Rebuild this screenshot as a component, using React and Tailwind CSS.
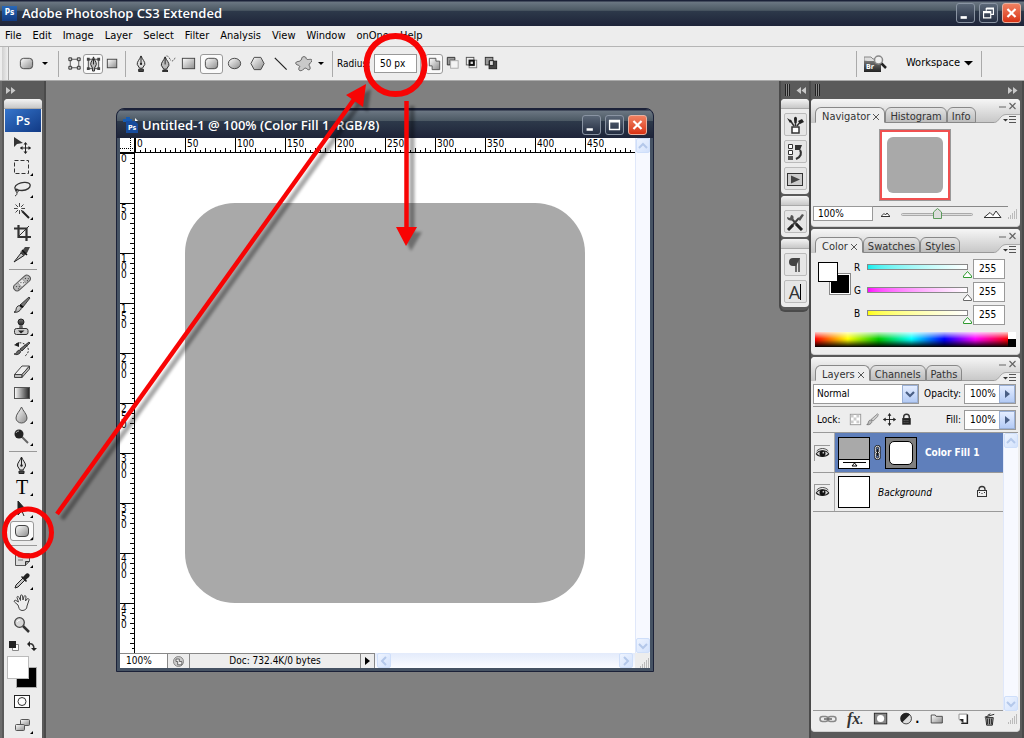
import { useState } from 'react';

const outlined = { fill: 'none', stroke: '#333', strokeWidth: 1 };

const Gradients = () => (
  <svg className="absolute h-0 w-0" aria-hidden="true">
    <defs>
      <linearGradient id="metal" x1="0" y1="0" x2="1" y2="1">
        <stop offset="0" stopColor="#fff" />
        <stop offset="1" stopColor="#8c8c8c" />
      </linearGradient>
      <linearGradient id="fade" x1="0" x2="1">
        <stop offset="0" stopColor="#fff" />
        <stop offset="1" stopColor="#222" />
      </linearGradient>
      <linearGradient id="coal" x1="0" y1="0" x2="0" y2="1">
        <stop offset="0" stopColor="#777" />
        <stop offset="1" stopColor="#222" />
      </linearGradient>
    </defs>
  </svg>
);

// every glyph is drawn on an 18 x 18 grid
const glyphs = {
  move: (
    <>
      <path d="M1 1v10l3-3 6-1z" fill="#333" />
      <path d="M12.5 7v10M7.5 12h10" stroke="#222" strokeWidth="1" />
      <path d="M12.5 6l-2 2.5h4zM12.5 18l-2-2.5h4zM7 12l2.5-2v4zM18 12l-2.5-2v4z" fill="#222" />
    </>
  ),
  marquee: <rect x="1.5" y="2.5" width="14" height="13" {...outlined} strokeDasharray="4 2" />,
  lasso: (
    <>
      <path d="M4 11C1 9 1 6 5 4c4-2.500 11-2 12 .5 1 3-3 6-8 6-3 0-5-.5-5.500-1.500" {...outlined} strokeWidth="1.300" />
      <path d="M4 9c2 1 2 3 0 3s-2-3 0-3M4 12c0 2 0 3-2 4" {...outlined} />
    </>
  ),
  wand: (
    <>
      <path d="M9 9l7 7" stroke="#222" strokeWidth="2" />
      <path d="M6.500 1v11M1 6.500h11M2.500 2.500l8 8M10.500 2.500l-8 8" {...outlined} strokeWidth=".9" />
      <circle cx="6.500" cy="6.500" r="1.800" fill="#fff" />
    </>
  ),
  crop: (
    <>
      <path d="M5.500 1v12H18M1 4.500h12.500V17" stroke="#333" strokeWidth="2.200" fill="none" />
      <path d="M6 12L16 2" stroke="#333" />
    </>
  ),
  slice: (
    <>
      <path d="M1 16L8 7l3 2.500z" fill="url(#metal)" stroke="#222" />
      <path d="M7 6l2-1 3-4h5l-3 6-3 3z" fill="#444" />
      <path d="M9 4l5 5" stroke="#111" strokeWidth="1.500" />
    </>
  ),
  heal: (
    <g transform="rotate(-42 9 9)">
      <rect x="-1" y="5.500" width="20" height="7" rx="3.500" fill="#b8b8b8" stroke="#555" />
      <rect x="6" y="6" width="6" height="6" fill="#e4e4e4" stroke="#777" strokeWidth=".6" />
      <path d="M2 8h1M4 10h1M2 11h1M14 8h1M16 10h1M14 11h1M8 8h1M10 10h1" stroke="#333" />
    </g>
  ),
  brush: (
    <>
      <path d="M7 9L16 1l1 1-7 9z" fill="#777" stroke="#222" strokeWidth=".8" />
      <path d="M1 16c3 0 1-4 4-6 2-1 4 1 3 3-1 2-4 4-7 3z" fill="url(#metal)" stroke="#222" />
      <path d="M7 9l3 2.500" stroke="#111" strokeWidth="2" />
    </>
  ),
  lockBrush: (
    <>
      <path d="M7 9L16 1l1 1-1 3-6 6z" fill="#ccc" stroke="#777" />
      <path d="M1 16c3 0 1-4 4-6 2-1 4 1 3 3-1 2-4 4-7 3z" fill="#bbb" stroke="#666" />
    </>
  ),
  stamp: (
    <>
      <circle cx="8" cy="4" r="3" fill="url(#coal)" stroke="#222" />
      <path d="M6.500 7h3l.5 4H6z" fill="#666" />
      <rect x="1.500" y="10.500" width="13.500" height="6" rx="2" fill="#ccc" stroke="#333" />
      <path d="M5 12.500h6.500L8 15.500z" fill="#222" />
    </>
  ),
  history: (
    <>
      <path d="M1 14c3 0 2-3 5-4 2 0 2 2 1 3-2 2-4 2-6 1zM7 9l9-7 1 1-8 8z" fill="#666" stroke="#222" strokeWidth=".8" />
      <path d="M3 4c5-3 10 0 12 4 1 3 0 6-3 8" {...outlined} strokeDasharray="2 1.500" />
      <path d="M1 5l5-3v5z" fill="#222" />
    </>
  ),
  eraser: (
    <>
      <path d="M1.500 12.500L9 4h7.500L9 12.500z" fill="#eee" stroke="#444" />
      <path d="M1.500 12.500H9v3H1.500zM9 15.500V12.500L16.500 4v3z" fill="#bdbdbd" stroke="#444" />
    </>
  ),
  gradient: <rect x="1.500" y="3.500" width="15" height="11" fill="url(#fade)" stroke="#555" />,
  blur: <path d="M8.500 1C7 5 3 8 3 12a5.500 5 0 0 0 11 0C14 8 10 5 8.500 1z" fill="url(#metal)" stroke="#555" />,
  dodge: (
    <>
      <path d="M8 8l7 7" stroke="#666" strokeWidth="2" />
      <circle cx="6" cy="6" r="4.500" fill="#222" />
      <path d="M3 5a3 3 0 0 1 3-2" stroke="#aaa" fill="none" />
    </>
  ),
  pen: (
    <>
      <path d="M8.500 1C7 5 4 7 4.500 10L7 14h3l2.500-4C13 7 10 5 8.500 1z" fill="#ddd" stroke="#222" />
      <path d="M8.500 1v8M6 15h5v2.500H6z" stroke="#222" fill="#444" />
      <circle cx="8.500" cy="9.500" r="1.200" fill="#222" />
    </>
  ),
  freePen: (
    <>
      <path d="M6.500 2C5 6 2 8 2.500 11L5 15h3l2.500-4C11 8 8 6 6.500 2z" fill="#bbb" stroke="#222" />
      <path d="M6.500 2v8M4 16h5v2H4z" stroke="#222" fill="#444" />
      <path d="M8 1c3 0 3 4 5 5s3-1 4-3" {...outlined} strokeDasharray="1 1" />
    </>
  ),
  arrow: <path d="M5 1v14l3.500-4 5-.5zM8.500 10l2.500 6" fill="#222" stroke="#222" />,
  rounded: <rect x="2.500" y="3.500" width="13" height="11" rx="3.500" fill="url(#metal)" stroke="#444" />,
  rect: <rect x="2.500" y="3.500" width="13" height="11" fill="url(#metal)" stroke="#444" />,
  ellipse: <ellipse cx="9" cy="9" rx="6.500" ry="5.500" fill="url(#metal)" stroke="#444" />,
  polygon: <path d="M5.500 2.500h7L16 9l-3.500 6.500h-7L2 9z" fill="url(#metal)" stroke="#444" />,
  line: <path d="M3 3l12.500 12.500" stroke="#222" strokeWidth="1.300" />,
  blob: (
    <path
      d="M7 4c0-3 5-3 5 0 1 2 6-1 6 2 0 2-4 3-3 5 2 3 1 6-2 4-2-2-3-1-5 1-4 2-5-1-3-4-1-2-5-1-4-4 1-2 5 0 6-4z"
      fill="#c9c9c9"
      stroke="#555"
    />
  ),
  shapeLayer: (
    <>
      <rect x="4.500" y="4.500" width="9" height="9" {...outlined} fill="#f2f2f2" stroke="#555" />
      <path d="M3 3h3v3H3zM12 3h3v3h-3zM3 12h3v3H3zM12 12h3v3h-3z" fill="#ccc" stroke="#333" />
    </>
  ),
  paths: (
    <>
      <path d="M3.500 4.500h11v10h-11z" fill="#ddd" stroke="#444" />
      <path d="M2 3h3v3H2zM13 3h3v3h-3zM2 13h3v3H2zM13 13h3v3h-3z" fill="#444" />
      <path d="M9 2c-1 4-3 5-3 8l2 4v3h2v-3l2-4c0-3-2-4-3-8z" fill="#bbb" stroke="#222" />
      <path d="M9 4v6" stroke="#222" />
    </>
  ),
  pixels: <rect x="3.500" y="4.500" width="10" height="9" fill="url(#metal)" stroke="#444" />,
  unite: <path d="M3.500 3.500h7v3h4v9h-8v-4h-3z" fill="url(#metal)" stroke="#555" />,
  subtract: (
    <>
      <path d="M3.500 10.500v-8h8v3h-5v5z" fill="#999" stroke="#333" />
      <rect x="7" y="6" width="8" height="8" fill="#f4f4f4" stroke="#aaa" />
    </>
  ),
  intersect: (
    <>
      <rect x="3.500" y="2.500" width="8" height="8" {...outlined} stroke="#555" />
      <rect x="6.500" y="5.500" width="8" height="8" {...outlined} stroke="#777" />
      <rect x="7" y="6" width="4.500" height="4.500" fill="#ddd" stroke="#111" strokeWidth="2" />
    </>
  ),
  exclude: (
    <>
      <rect x="3.500" y="2.500" width="8" height="8" fill="#999" stroke="#333" />
      <rect x="7.500" y="6.500" width="8" height="8" fill="#444" stroke="#222" />
      <rect x="8" y="6" width="4" height="5" fill="#ddd" stroke="#222" />
    </>
  ),
  notes: (
    <>
      <path d="M2.500 3.500h14v8l-4 4h-10z" fill="#ddd" stroke="#555" />
      <path d="M5 7h9M5 10h5" stroke="#777" />
      <path d="M12.500 15.500v-4h4" fill="#999" stroke="#333" />
    </>
  ),
  eyedropper: (
    <>
      <path d="M2 16l1-3 7-7 2 2-7 7z" fill="url(#metal)" stroke="#222" />
      <path d="M8 5l5 5 1-1-1-1.500C15 6 18 4 16 2s-4 1-6 3L9 4z" fill="#222" />
    </>
  ),
  hand: (
    <path
      d="M5 11L1.500 8c-1-1 .5-2.500 1.500-1.500L5.500 8 4 3.500c0-1.500 1.500-1.500 2 0l1.500 3V2c0-1.500 2-1.500 2 0l.5 4 1-3.500c.5-1.500 2-1 2 .5L12.500 7l1.500-2c1-1 2.500 0 2 1l-2 6c0 3-2 4.500-5 4.500s-3-3-4-5.500z"
      fill="#eee"
      stroke="#444"
    />
  ),
  zoom: (
    <>
      <path d="M10 10l6 6" stroke="#333" strokeWidth="2.500" />
      <circle cx="6.500" cy="6.500" r="4.800" fill="#d8d8d8" stroke="#444" strokeWidth="1.300" />
      <path d="M4 6a3 3 0 0 1 3-2" stroke="#fff" fill="none" />
    </>
  ),
  quickMask: (
    <>
      <rect x="1.500" y="3.500" width="15" height="12" fill="#fff" stroke="#222" />
      <circle cx="9" cy="9.500" r="4" {...outlined} />
    </>
  ),
  screen: (
    <>
      <rect x="7.500" y="3.500" width="9" height="6" rx="1" fill="url(#metal)" stroke="#555" />
      <rect x="2.500" y="8.500" width="9" height="6" rx="1" fill="url(#metal)" stroke="#555" />
    </>
  ),
  brushes: (
    <>
      <rect x="6" y="11" width="7" height="6" fill="#fff" stroke="#333" strokeWidth="1.500" />
      <path d="M8 10L4 4M9.500 10V3M11 10l4-5" stroke="#333" strokeWidth="1.500" />
      <path d="M1 2l3 5 2-2zM8 3c0-3 3-3 3 0l-.5 4h-2zM12 5l4-2 2 3-4 2z" fill="#222" />
    </>
  ),
  historyPanel: (
    <>
      <path d="M2.500 1.500h4v4h-4zM2.500 7.500h4v4h-4z" fill="#fff" stroke="#333" />
      <path d="M2 13h5v4H2z" fill="#555" />
      <path d="M10 16c5-2 6-6 4-9" fill="none" stroke="#333" strokeWidth="2.200" />
      <path d="M9 7V2h7l-2 5z" fill="#333" />
    </>
  ),
  actions: (
    <>
      <rect x="1.500" y="3.500" width="15" height="12" fill="#ccc" stroke="#333" />
      <path d="M5 5.500v8l9-4z" fill="#444" />
    </>
  ),
  presets: (
    <>
      <path d="M3 16L13 5M15 16L5 5" stroke="#444" strokeWidth="2" />
      <path d="M10 11l6 6M2 17l5-5" stroke="#222" strokeWidth="3" />
      <path d="M1 4l3 1 1-3c3 0 3 3 2 5-2 1-6 1-6-3zM12 6l4-5 2 1-4 6z" fill="#555" />
    </>
  ),
  paragraph: (
    <>
      <path d="M10 2v14M13 2v14" stroke="#444" strokeWidth="1.500" />
      <path d="M14 2H7a4 4 0 0 0 0 8h3z" fill="#444" />
    </>
  ),
  link: (
    <>
      <rect x="1" y="6.500" width="8" height="5" rx="2.500" {...outlined} stroke="#888" strokeWidth="1.500" />
      <rect x="9" y="6.500" width="8" height="5" rx="2.500" {...outlined} stroke="#888" strokeWidth="1.500" />
      <path d="M5 9h8" stroke="#666" strokeWidth="1.500" />
    </>
  ),
  mask: (
    <>
      <rect x="1.500" y="2.500" width="14" height="12" fill="#888" stroke="#222" />
      <circle cx="8.500" cy="8.500" r="4" fill="#fff" />
    </>
  ),
  adjust: (
    <>
      <circle cx="8" cy="8.500" r="6" fill="#ddd" stroke="#333" />
      <path d="M3.500 13A6 6 0 0 1 12.500 4z" fill="#222" />
    </>
  ),
  folder: <path d="M2.500 13.500v-9h4.500l1 1.500h7v7.500z" fill="url(#metal)" stroke="#444" />,
  newLayer: (
    <>
      <path d="M4.500 3.500h9v10H9l-4.500-4z" fill="#fff" stroke="#888" />
      <path d="M14 4v10H7" stroke="#222" strokeWidth="1.500" fill="none" />
      <path d="M5 9h4.500v4.500z" fill="#222" />
    </>
  ),
  trash: (
    <>
      <path d="M5 7h8l-1 8H6z" fill="#aaa" stroke="#222" />
      <path d="M7 8v6M9 8v6M11 8v6M4 6.500l10-3M7 4.500l3-1.500" stroke="#222" fill="none" />
    </>
  ),
  checker: (
    <>
      <rect x="3.500" y="3.500" width="11" height="11" fill="#fff" stroke="#999" />
      <path d="M4 4h3v3H4zM10 4h3v3h-3zM7 7h3v3H7zM4 10h3v3H4zM10 10h3v3h-3z" fill="#ccc" />
    </>
  ),
  lockMove: (
    <>
      <path d="M9 3v12M3 9h12" stroke="#222" />
      <path d="M9 2L7 5h4zM9 16l-2-3h4zM2 9l3-2v4zM16 9l-3-2v4z" fill="#222" />
    </>
  ),
  lock: (
    <>
      <path d="M6 8V6.500a3 3 0 0 1 6 0V8" {...outlined} strokeWidth="1.500" />
      <rect x="4.500" y="7.500" width="9" height="7" fill="#222" />
      <path d="M6 10h1M8 10h1M10 10h1M6 12h1M8 12h1M10 12h1" stroke="#777" />
    </>
  ),
  lockOpen: (
    <>
      <path d="M6 8V6.500a3 3 0 0 1 6 0V8" {...outlined} strokeWidth="1.300" />
      <rect x="4.500" y="7.500" width="9" height="6" fill="#eee" stroke="#333" />
      <path d="M6 9.500h1M8.500 10.500h1M11 9.500h1" stroke="#333" />
    </>
  ),
  eye: (
    <>
      <path d="M1.500 9.500c3-5 12-5 15 0-3 4-12 4-15 0z" fill="#ddd" stroke="#222" strokeWidth="1.300" />
      <circle cx="9" cy="9" r="3.600" fill="#111" />
      <circle cx="10" cy="8" r="1" fill="#ccc" />
      <path d="M2 6c4-4 10-4 14 0" {...outlined} />
    </>
  ),
  chain: (
    <>
      <rect x="6.500" y="1.500" width="5" height="8" rx="2.500" fill="none" stroke="#222" strokeWidth="2.800" />
      <rect x="6.500" y="8.500" width="5" height="8" rx="2.500" fill="none" stroke="#222" strokeWidth="2.800" />
      <rect x="6.500" y="1.500" width="5" height="8" rx="2.500" fill="none" stroke="#ddd" strokeWidth="1.200" />
      <rect x="6.500" y="8.500" width="5" height="8" rx="2.500" fill="none" stroke="#ddd" strokeWidth="1.200" />
      <path d="M9 5v8" stroke="#111" strokeWidth="1.200" />
    </>
  ),
  status: (
    <>
      <circle cx="9" cy="9" r="6" fill="#ccc" stroke="#777" />
      <path d="M6 6h4v3h3v4H8V9H6z" fill="#eee" stroke="#555" />
    </>
  ),
};

const Glyph = ({ name, className = 'h-[18px] w-[18px]' }) => (
  <svg viewBox="0 0 18 18" className={`shrink-0 ${className}`} aria-hidden="true">
    {glyphs[name]}
  </svg>
);

const Caret = ({ className = 'w-2' }) => (
  <svg viewBox="0 0 8 4" className={className} aria-hidden="true">
    <path d="M0 0h8L4 4z" fill="#000" />
  </svg>
);

const Chevrons = ({ flip = false }) => (
  <svg viewBox="0 0 10 7" className={`h-[7px] w-[10px] ${flip ? 'rotate-180' : ''}`} aria-hidden="true">
    <path d="M0 0l4.500 3.500L0 7zM5 0l4.500 3.500L5 7z" fill="#c8c8c8" />
  </svg>
);

const Grip = () => (
  <svg viewBox="0 0 10 10" className="h-2.5 w-2.5" aria-hidden="true">
    <path d="M8 1h1M6 3h1M8 3h1M4 5h1M6 5h1M8 5h1M2 7h1M4 7h1M6 7h1M8 7h1M0 9h1M2 9h1M4 9h1M6 9h1M8 9h1" stroke="#888" />
  </svg>
);

const titleGradient =
  'bg-[linear-gradient(#1b2138_0,#1b2138_1px,#6b7682_2px,#4c5964_40%,#2d394a_42%,#1e2439_100%)]';

const windowGlyphs = {
  Minimize: <path d="M4 13h7v3H4z" fill="#fff" />,
  Restore: <path d="M7 4h8v7h-3M7 4v3M7 5h8M4 8h8v7H4zM4 9h8" fill="none" stroke="#fff" strokeWidth="1.300" />,
  Maximize: <path d="M4 4.500h11v10H4zM4 6h11" fill="none" stroke="#fff" strokeWidth="1.500" />,
  Close: <path d="M5 5l9 9M14 5l-9 9" stroke="#fff" strokeWidth="2.400" />,
};

const WindowButtons = ({ names }) => (
  <div className="flex gap-1">
    {names.map((name) => (
      <button
        key={name}
        aria-label={name}
        className={`flex h-5 w-[19px] items-center justify-center rounded-[3px] border ${
          name === 'Close'
            ? 'border-[#e8b0a0] bg-gradient-to-b from-[#f08060] to-[#d83010]'
            : 'border-[#8a94a3] bg-gradient-to-b from-[#5c6878] to-[#252e42]'
        }`}
      >
        <svg viewBox="0 0 19 19" className="h-[18px] w-[18px]">{windowGlyphs[name]}</svg>
      </button>
    ))}
  </div>
);

const menus = ['File', 'Edit', 'Image', 'Layer', 'Select', 'Filter', 'Analysis', 'View', 'Window', 'onOne', 'Help'];

const Separator = ({ className = '' }) => <div className={`h-[26px] w-px shrink-0 bg-[#aaa] ${className}`} />;

const IconButton = ({ name, active, className = 'w-[18px]' }) => (
  <button
    aria-label={name}
    className={`flex h-5 shrink-0 items-center justify-center ${className} ${
      active ? 'rounded-[3px] border border-[#999] bg-[#fafafa]' : ''
    }`}
  >
    <Glyph name={name} className="h-[17px] w-[17px]" />
  </button>
);

const OptionsBar = () => (
  <div className="flex h-[35px] shrink-0 items-center border-y border-[#aaa] border-t-[#b5b5b5] bg-[#ededed]">
    <div className="ml-0.5 h-[33px] w-[7px] border-r border-[#aaa] bg-gradient-to-r from-[#d0d0d0] to-[#eee]" />
    <IconButton name="rounded" className="ml-2 w-[18px]" />
    <button aria-label="Tool presets" className="ml-1 flex w-3 justify-center">
      <Caret className="w-1.5" />
    </button>
    <Separator className="ml-[7px]" />
    <IconButton name="shapeLayer" className="ml-1.5 w-[18px]" />
    <IconButton name="paths" active className="w-5" />
    <IconButton name="pixels" />
    <Separator className="ml-1" />
    <IconButton name="pen" className="ml-1.5 w-[18px]" />
    <IconButton name="freePen" className="ml-2 w-[18px]" />
    <IconButton name="rect" className="w-6" />
    <IconButton name="rounded" active className="w-[23px]" />
    <IconButton name="ellipse" className="w-[23px]" />
    <IconButton name="polygon" className="w-[23px]" />
    <IconButton name="line" className="w-[23px]" />
    <IconButton name="blob" className="w-[23px]" />
    <button aria-label="Geometry options" className="flex w-3 justify-center">
      <Caret className="w-1.5" />
    </button>
    <Separator className="ml-[5px]" />
    <label htmlFor="radius" className="ml-1 w-9 shrink-0 text-[10px]">Radius:</label>
    <input id="radius" defaultValue="50 px" className="ml-px h-[19px] w-[43px] shrink-0 border border-[#999] bg-white pl-[5px] text-[10px]" />
    <Separator className="ml-[3px]" />
    <IconButton name="unite" active className="ml-1 w-[18px]" />
    <IconButton name="subtract" className="w-[19px]" />
    <IconButton name="intersect" className="w-[19px]" />
    <IconButton name="exclude" className="w-[19px]" />
    <div className="ml-auto flex items-center">
      <Separator />
      <button aria-label="Go to Bridge" className="ml-[7px] flex">
        <svg viewBox="0 0 23 18" className="h-[18px] w-[23px]">
          <path d="M0 6V2h7l2 2h6v4z" fill="#ddd" stroke="#888" />
          <path d="M0 6h15l2 2v9H0z" fill="url(#coal)" />
          <text x="2" y="14" fontSize="7" fontWeight="bold" fill="#fff">Br</text>
          <path d="M17 8l5 5" stroke="#222" strokeWidth="2.500" />
          <circle cx="14.500" cy="5" r="4" fill="#eee" stroke="#888" strokeWidth="1.500" />
        </svg>
      </button>
      <button className="ml-[19px] flex items-center gap-1 text-[11px]">
        Workspace
        <Caret className="w-[9px]" />
      </button>
      <Separator className="mr-[42px] ml-2" />
    </div>
  </div>
);

const toolGroups = [
  ['move', 'marquee', 'lasso', 'wand', 'crop', 'slice'],
  ['heal', 'brush', 'stamp', 'history', 'eraser', 'gradient', 'blur', 'dodge'],
  ['pen', 'type', 'arrow', 'rounded'],
  ['notes', 'eyedropper', 'hand', 'zoom'],
];
const singleTools = ['move', 'crop', 'hand', 'zoom'];

const ToolButton = ({ name, active, onClick }) => (
  <button aria-label={name} onClick={onClick} className="relative flex h-[22px] w-full items-center justify-center pr-0.5">
    <span className={`flex h-5 w-6 items-center justify-center ${active ? 'rounded-[3px] border border-[#999] bg-[#fafafa]' : ''}`}>
      {name === 'type' ? (
        <span className="font-['Liberation_Serif',serif] text-xl leading-5">T</span>
      ) : (
        <Glyph name={name} />
      )}
    </span>
    {!singleTools.includes(name) && (
      <svg viewBox="0 0 3 3" className="absolute right-2 bottom-0.5 h-[3px] w-[3px]">
        <path d="M3 0v3H0z" fill="#000" />
      </svg>
    )}
  </button>
);

const Toolbar = () => {
  const [tool, setTool] = useState('rounded');

  return (
    <aside className="flex w-[46px] shrink-0 flex-col border-x-2 border-[#6c6c6c] border-r-[#4a4a4a] bg-[#5a5a5a] px-0.5">
      <button aria-label="Expand toolbar" className="flex h-[18px] shrink-0 items-center pl-0.5">
        <Chevrons />
      </button>
      <div className="flex-1 rounded-t-sm bg-[#ececec] px-px">
        <div className="-mx-px h-2.5 rounded-t-sm border-b border-[#aaa] bg-gradient-to-b from-[#f4f4f4] to-[#c8c8c8]" />
        <div className="flex h-[23px] items-center justify-center bg-gradient-to-br from-[#3575cc] to-[#123a85] font-['Open_Sans',sans-serif] text-[13px] font-semibold text-white">
          Ps
        </div>
        <div className="pt-0.5">
          {toolGroups.map((group, i) => (
            <div key={group[0]}>
              {i > 0 && <div className="mx-1 h-1.5 pt-[3px]"><div className="h-px bg-[#999]" /></div>}
              {group.map((name) => (
                <ToolButton key={name} name={name} active={tool === name} onClick={() => setTool(name)} />
              ))}
            </div>
          ))}
        </div>
        <div className="flex h-5 items-center justify-center gap-2">
          <svg viewBox="0 0 10 10" className="h-2.5 w-2.5">
            <path d="M3.500 3.500h6v6h-6z" fill="#fff" stroke="#888" />
            <path d="M0 0h7v7H0z" fill="#222" />
          </svg>
          <svg viewBox="0 0 10 10" className="h-2.5 w-2.5">
            <path d="M2 3c3-1 5 1 5 5" fill="none" stroke="#333" strokeWidth="1.500" />
            <path d="M0 3l3-3v6zM4 7h6l-3 3z" fill="#222" />
          </svg>
        </div>
        <div className="relative h-8">
          <button aria-label="Background color" className="absolute right-1 bottom-0 h-[21px] w-[21px] border border-[#aaa] bg-black" />
          <button aria-label="Foreground color" className="absolute top-0 left-0.5 h-[23px] w-[22px] border border-[#bbb] bg-white" />
        </div>
        <button aria-label="Quick mask" className="mt-0.5 flex h-[22px] w-full items-center justify-center pr-0.5">
          <Glyph name="quickMask" />
        </button>
        <div className="mt-0.5">
          <ToolButton name="screen" />
        </div>
      </div>
    </aside>
  );
};

const rulerTicks = Array.from({ length: 101 }, (_, i) => i * 5);
const rulerLabels = [0, 50, 100, 150, 200, 250, 300, 350, 400, 450];

const tickLength = (t) => {
  if (t % 50 === 0) return 15;
  return t % 10 === 0 ? 5 : 3;
};

const HorizontalRuler = () => (
  <svg className="h-[15px] min-w-0 flex-1 border-b border-black bg-white">
    {rulerTicks.map((t) => (
      <path key={t} d={`M${t + 0.5} 15v-${tickLength(t)}`} stroke="#000" />
    ))}
    {rulerLabels.map((n) => (
      <text key={n} x={n + 2} y="9" fontSize="10">{n}</text>
    ))}
  </svg>
);

const VerticalRuler = () => (
  <div className="relative h-[500px] w-[15px] shrink-0 border-r border-black bg-white">
    <svg className="absolute inset-0 h-full w-full">
      {rulerTicks.map((t) => (
        <path key={t} d={`M15 ${t + 0.5}h-${tickLength(t)}`} stroke="#000" />
      ))}
    </svg>
    {rulerLabels.map((n) => (
      <div key={n} className="relative ml-px h-[50px] w-[7px] pt-0.5 text-[10px] leading-2 break-all">
        {n}
      </div>
    ))}
  </div>
);

const arrowRotation = {
  up: 'rotate-180',
  down: '',
  left: 'rotate-90',
  right: '-rotate-90',
};

const ScrollButton = ({ direction }) => (
  <button
    aria-label={`Scroll ${direction}`}
    className="flex h-[15px] w-[14px] shrink-0 items-center justify-center rounded-xs border border-[#cfdffa] bg-gradient-to-br from-[#eef4ff] to-[#d3e2fc]"
  >
    <svg viewBox="0 0 10 10" className={`h-2.5 w-2.5 ${arrowRotation[direction]}`}>
      <path d="M1 3l4 4 4-4" fill="none" stroke="#b4c8ea" strokeWidth="2" />
    </svg>
  </button>
);

const VerticalScroll = () => (
  <div className="flex w-[15px] shrink-0 flex-col items-center justify-between border-l border-[#e0e8fa] bg-[#f7f9ff]">
    <ScrollButton direction="up" />
    <ScrollButton direction="down" />
  </div>
);

const DocumentWindow = () => (
  <section className="overflow-hidden rounded-t-lg border border-[#1b2138] bg-[#455263]">
    <header className={`flex h-[29px] items-center rounded-t-lg pt-0.5 pr-1.5 pl-1.5 ${titleGradient}`}>
      <svg viewBox="0 0 15 16" className="h-4 w-[15px]" aria-hidden="true">
        <path d="M0 2h9v3H0zM3 0h4v2H3z" fill="#175bb0" />
        <path d="M3 4h9l3 3v9H3z" fill="#174b9c" />
        <path d="M12 1l3 3h-3z" fill="#fff" />
        <text x="5" y="13" fontSize="7" fontWeight="bold" fill="#fff">Ps</text>
      </svg>
      <h2 className="ml-1 flex-1 truncate font-['Open_Sans',sans-serif] text-[13px] leading-4 font-semibold text-white">
        Untitled-1 @ 100% (Color Fill 1, RGB/8)
      </h2>
      <WindowButtons names={['Minimize', 'Maximize', 'Close']} />
    </header>
    <div className="mx-[3px] mb-[3px] bg-white">
      <div className="flex">
        <div className="min-w-0 flex-1">
          <div className="flex">
            <svg className="h-[15px] w-[15px] shrink-0 border-r border-b border-black bg-white">
              <path d="M0 10.500h15M10.500 0v15" stroke="#000" strokeDasharray="1 1" />
            </svg>
            <HorizontalRuler />
          </div>
          <div className="flex">
            <VerticalRuler />
            <div className="min-w-0 flex-1 overflow-hidden p-[50px]">
              <div className="h-[400px] rounded-[50px] bg-[#a9a9a9]" />
            </div>
          </div>
        </div>
        <VerticalScroll />
      </div>
      <div className="flex h-[15px] items-stretch bg-[#ededed] text-[10px] leading-[14px]">
        <input aria-label="Zoom level" defaultValue="100%" className="w-12 border-t border-r border-[#888] bg-white pl-1.5" />
        <button aria-label="Version cue" className="flex w-[22px] items-center justify-center border-t border-r border-[#888]">
          <Glyph name="status" className="h-[15px] w-[15px]" />
        </button>
        <div className="w-[171px] border-t border-r border-[#888] text-center">Doc: 732.4K/0 bytes</div>
        <button aria-label="Status options" className="flex w-[14px] items-center justify-center border-t border-r border-[#888]">
          <svg viewBox="0 0 5 8" className="h-2 w-[5px]"><path d="M0 0v8l5-4z" /></svg>
        </button>
        <div className="flex flex-1 justify-between bg-gradient-to-b from-[#e3ebfb] to-[#fbfcff] px-0.5">
          <ScrollButton direction="left" />
          <ScrollButton direction="right" />
        </div>
        <div className="flex w-[15px] items-end justify-end"><Grip /></div>
      </div>
    </div>
  </section>
);

const dockGroups = [
  ['brushes', 'historyPanel', 'actions'],
  ['presets'],
  ['paragraph', 'character'],
];

const IconDock = () => (
  <div className="w-[30px] shrink-0 self-start rounded-b-md border-b-2 border-l-2 border-[#4a4a4a] bg-[#5a5a5a] pb-[3px]">
    <div className="flex h-[18px] items-center gap-1.5 pl-1">
      <div className="h-3 w-[5px] bg-[repeating-linear-gradient(90deg,#222_0_1px,#888_1px_2px)]" />
      <Chevrons flip />
    </div>
    <div className="flex flex-col gap-0.5">
      {dockGroups.map((group) => (
        <div key={group[0]} className="flex flex-col items-center gap-1 rounded-sm bg-[#ececec] pb-1">
          <div className="h-2.5 w-full rounded-t-sm border-b border-[#aaa] bg-gradient-to-b from-[#f4f4f4] to-[#c8c8c8]" />
          {group.map((name) => (
            <button
              key={name}
              aria-label={name}
              className="flex h-[23px] w-[23px] items-center justify-center rounded-xs border border-[#bbb] bg-[#e6e6e6]"
            >
              {name === 'character' ? (
                <span className="border-r border-black font-['Open_Sans',sans-serif] text-lg leading-4 text-[#333]">A</span>
              ) : (
                <Glyph name={name} />
              )}
            </button>
          ))}
        </div>
      ))}
    </div>
  </div>
);

const Panel = ({ tabs, className = '', children }) => {
  const [active, setActive] = useState(tabs[0]);

  return (
    <section className={`flex flex-col rounded-sm border-b border-[#d0d0d0] bg-[#ededed] ${className}`}>
      <header className="flex h-6 shrink-0 items-end rounded-t-sm bg-gradient-to-b from-[#f6f6f6] to-[#c6c6c6] pl-1">
        <div className="flex flex-1 items-end border-b border-[#999]">
          {tabs.map((tab) => (
            <button
              key={tab}
              onClick={() => setActive(tab)}
              className={`-mb-px flex h-4 items-center gap-0.5 rounded-t-md border border-[#888] px-1 pt-[3px] text-[11px] leading-3 text-[#333] ${
                tab === active ? 'border-b-[#ededed] bg-[#ededed] pl-1.5' : 'bg-gradient-to-b from-[#e2e2e2] to-[#bdbdbd]'
              }`}
            >
              {tab}
              {tab === active && (
                <svg viewBox="0 0 8 8" className="h-2 w-2"><path d="M1 1l6 6M7 1L1 7" stroke="#555" /></svg>
              )}
            </button>
          ))}
        </div>
        <svg viewBox="0 0 26 24" className="h-6 w-[26px] shrink-0" aria-hidden="true">
          <path d="M0 24c5 0 6-8 12-8h14v8z" fill="#ededed" />
          <path d="M0 23.500c5 0 6-8 12-8h14" fill="none" stroke="#aaa" />
          <path d="M5 8h7M15.500 4l6 6M21.500 4l-6 6" stroke="#666" strokeWidth="1.200" />
          <path d="M9 20h5l-2.500 2.500z" fill="#333" />
          <path d="M15 17.500h7M15 20.500h7M15 23.500h7" stroke="#555" />
        </svg>
      </header>
      {children}
    </section>
  );
};

const NavigatorPanel = () => (
  <Panel tabs={['Navigator', 'Histogram', 'Info']}>
    <div className="flex justify-center pt-[6px] pr-0.5 pb-[5px]">
      <div className="h-[72px] w-[72px] border border-[#999] bg-[#f05050] p-0.5">
        <div className="h-full w-full bg-white p-[5px]">
          <div className="h-full w-full rounded-md bg-[#a9a9a9]" />
        </div>
      </div>
    </div>
    <div className="mb-[5px] flex items-center pr-0.5">
      <input aria-label="Navigator zoom" defaultValue="100%" className="ml-0.5 h-[15px] w-[60px] border border-[#999] bg-white pl-1 text-[10px]" />
      <div className="flex h-[15px] flex-1 items-center justify-between border-t border-[#888] pr-1.5 pl-2">
        <svg viewBox="0 0 9 5" className="h-[5px] w-[9px]"><path d="M0 4.500l3-3 1.500 1.500L6 1l3 3.500z" fill="#fff" stroke="#333" /></svg>
        <div className="relative flex h-3 w-[72px] items-center">
          <div className="h-[3px] w-full rounded-full border border-[#aaa] bg-[#ddd]" />
          <svg viewBox="0 0 9 11" className="absolute top-0 left-8 h-[11px] w-[9px]">
            <path d="M.5 10.500V4l4-3.500 4 3.500v6.500z" fill="#ddd" stroke="#5c9a5c" />
          </svg>
          <input type="range" aria-label="Zoom slider" className="absolute inset-0 w-full opacity-0" />
        </div>
        <svg viewBox="0 0 18 8" className="h-2 w-[18px]"><path d="M0 7.500l6-5 3 3L12 1l5 6.500z" fill="#fff" stroke="#333" /></svg>
      </div>
      <Grip />
    </div>
  </Panel>
);

const channels = [
  { id: 'R', track: 'bg-gradient-to-r from-[#00f0f0] to-white' },
  { id: 'G', track: 'bg-gradient-to-r from-[#f0f] to-white' },
  { id: 'B', track: 'bg-gradient-to-r from-[#ff0] to-white' },
];

const ColorPanel = () => (
  <Panel tabs={['Color', 'Swatches', 'Styles']}>
    <div className="flex pt-1.5 pr-[15px] pl-[7px]">
      <div className="relative mt-[3px] h-8 w-8 shrink-0">
        <button aria-label="Background swatch" className="absolute right-0 bottom-0 h-5 w-5 border border-white bg-black outline outline-[#888]" />
        <button aria-label="Foreground swatch" className="absolute top-0 left-0 h-5 w-5 border border-black bg-white" />
      </div>
      <div className="ml-1 flex flex-1 flex-col gap-[3px]">
        {channels.map(({ id, track }) => (
          <div key={id} className="flex h-5 items-center">
            <label htmlFor={`channel-${id}`} className="w-[13px] pb-1 text-[10px]">{id}</label>
            <div className="relative h-5 flex-1">
              <div className={`mt-[5px] h-1.5 border border-[#888] ${track}`} />
              <svg viewBox="0 0 9 7" className="absolute top-3 -right-1 h-[7px] w-[9px]">
                <path d="M.5 6.500V5l4-4.500 4 4.500v1.500z" fill="#fff" stroke={id === 'G' ? '#666' : '#2f9a2f'} />
              </svg>
              <input type="range" aria-label={`${id} slider`} max="255" defaultValue="255" className="absolute inset-0 w-full opacity-0" />
            </div>
            <input id={`channel-${id}`} defaultValue="255" className="ml-[5px] h-5 w-8 border border-[#999] bg-white pl-[5px] pb-px text-[10px]" />
          </div>
        ))}
      </div>
    </div>
    <div className="mx-1 mt-[7px] mb-[7px] flex h-[15px]">
      <div className="flex-1 bg-[linear-gradient(rgba(255,255,255,.8),transparent_45%,rgba(0,0,0,.1)_55%,#000),linear-gradient(90deg,#f00,#ff0_17%,#0c0_33%,#0ff_50%,#00f_67%,#f0f_83%,#f00)]" />
      <div className="w-2 bg-[linear-gradient(#fff_50%,#000_50%)]" />
    </div>
  </Panel>
);

const PercentField = ({ id, label }) => (
  <div className="flex items-center text-[10px]">
    <label htmlFor={id}>{label}</label>
    <div className="ml-[3px] flex h-5 w-[52px] border border-[#999] bg-white">
      <input id={id} defaultValue="100%" className="w-full min-w-0 pl-[5px]" />
      <button aria-label={`${label} slider`} className="flex w-4 shrink-0 items-center justify-center border border-[#9ab0d6] bg-gradient-to-b from-[#e4edff] to-[#b4cbf5]">
        <svg viewBox="0 0 5 8" className="h-2 w-[5px]"><path d="M0 0v8l5-4z" fill="#4a5f85" /></svg>
      </button>
    </div>
  </div>
);

const VisibilityCell = () => (
  <div className="flex w-[22px] shrink-0 items-center border-r border-[#aaa] pl-px">
    <button aria-label="Toggle visibility" className="border-t border-l border-[#999]">
      <Glyph name="eye" className="h-[15px] w-[15px]" />
    </button>
  </div>
);

const LayersPanel = () => (
  <Panel tabs={['Layers', 'Channels', 'Paths']} className="mb-1.5 flex-1 pb-1">
    <div className="mx-0.5 flex h-[26px] items-center justify-between border-b border-[#999] pr-0.5">
      <div className="relative h-5 w-[106px]">
        <select aria-label="Blend mode" className="block h-5 w-full appearance-none border border-[#999] bg-white py-0 pl-[3px] text-[10px]">
          <option>Normal</option>
          <option>Multiply</option>
          <option>Screen</option>
        </select>
        <span className="pointer-events-none absolute top-px right-px flex h-[18px] w-4 items-center justify-center border border-[#9ab0d6] bg-gradient-to-b from-[#e4edff] to-[#b4cbf5]">
          <svg viewBox="0 0 10 10" className="h-2.5 w-2.5"><path d="M1 3l4 4 4-4" fill="none" stroke="#4a5f85" strokeWidth="2.200" /></svg>
        </span>
      </div>
      <PercentField id="opacity" label="Opacity:" />
    </div>
    <div className="mx-0.5 flex h-[26px] items-center justify-between border-b border-[#999] pr-0.5 pl-1">
      <div className="flex items-center text-[10px]">
        <span className="mr-1.5">Lock:</span>
        <Glyph name="checker" className="h-[17px] w-[17px]" />
        <Glyph name="lockBrush" className="mx-0.5 h-[13px] w-[13px]" />
        <Glyph name="lockMove" className="h-[17px] w-[17px]" />
        <Glyph name="lock" className="h-[17px] w-[17px]" />
      </div>
      <PercentField id="fill" label="Fill:" />
    </div>
    <div className="mx-0.5 flex flex-1">
      <ul className="flex-1 border-b border-[#999] text-[10px]">
        <li className="flex h-10 border-b border-[#999]">
          <VisibilityCell />
          <div className="flex flex-1 items-center bg-[#5f7fbb] pl-[3px]">
            <div className="flex h-8 w-8 flex-col border border-black bg-[#a9a9a9]">
              <svg viewBox="0 0 30 9" className="mt-auto h-[9px] w-[30px]">
                <path d="M0 0h30v9H0z" fill="#fff" />
                <path d="M0 .5h30M4 3.500h23M15.500 4l-2.500 3h5z" fill="none" stroke="#000" />
              </svg>
            </div>
            <Glyph name="chain" className="h-[15px] w-[15px]" />
            <div className="h-8 w-8 border border-black bg-[#808080] p-[3px]">
              <div className="h-full w-full rounded-[5px] border border-black bg-white" />
            </div>
            <span className="ml-2 font-bold text-white">Color Fill 1</span>
          </div>
        </li>
        <li className="flex h-[39px] border-b border-[#999]">
          <VisibilityCell />
          <div className="flex flex-1 items-center pr-3 pl-[3px]">
            <div className="h-8 w-8 border border-black bg-white" />
            <span className="ml-2 flex-1 italic">Background</span>
            <Glyph name="lockOpen" />
          </div>
        </li>
      </ul>
      <VerticalScroll />
    </div>
    <footer className="flex h-4 items-center justify-between pr-0.5 pl-2">
      <Glyph name="link" />
      <button aria-label="Layer style" className="font-['Liberation_Serif',serif] text-base leading-4 font-bold text-[#333] italic">
        fx<span className="text-xs">.</span>
      </button>
      <Glyph name="mask" className="h-4 w-4" />
      <div className="flex items-end">
        <Glyph name="adjust" className="h-4 w-4" />
        <span className="text-xs leading-4 font-bold">.</span>
      </div>
      <Glyph name="folder" className="h-4 w-4" />
      <Glyph name="newLayer" className="h-4 w-4" />
      <Glyph name="trash" className="h-[17px] w-[17px]" />
      <Grip />
    </footer>
  </Panel>
);

// red callouts that tie the selected tool to its radius field
const Callouts = () => (
  <svg className="pointer-events-none absolute top-0 left-0 h-[600px] w-[460px]" aria-hidden="true">
    <defs>
      <filter id="soft" filterUnits="userSpaceOnUse" x="0" y="0" width="460" height="600">
        <feGaussianBlur stdDeviation="1.800" />
      </filter>
    </defs>
    <g transform="translate(5 5)" opacity=".35" filter="url(#soft)">
      <path d="M57 514L355 98M407 101v128" stroke="#000" strokeWidth="5" />
      <path d="M366 84l-20 11 17 12zM396 227h21l-11 19z" />
    </g>
    <g stroke="#f80404" fill="none">
      <circle cx="395.500" cy="65" r="29" strokeWidth="6" />
      <circle cx="28" cy="532.500" r="23.500" strokeWidth="5" />
      <path d="M57 514L355 98" strokeWidth="4.500" />
      <path d="M406.500 101v128" strokeWidth="4.500" />
    </g>
    <path d="M366 84l-20 11 17 12zM396 227h21l-11 19z" fill="#f80404" />
  </svg>
);

const App = () => (
  <div className="relative flex h-screen min-h-[700px] flex-col overflow-hidden bg-[#808080] font-['DejaVu_Sans_Condensed','DejaVu_Sans',sans-serif] text-black">
    <Gradients />
    <header className={`flex h-[26px] shrink-0 items-center pr-[3px] pl-0.5 ${titleGradient}`}>
      <div className="flex h-[15px] w-[15px] items-center justify-center bg-gradient-to-b from-[#2a69b8] to-[#123a80] text-[8px] font-bold text-white">Ps</div>
      <h1 className="ml-[5px] flex-1 font-['Open_Sans',sans-serif] text-[13px] leading-4 font-semibold text-white">
        Adobe Photoshop CS3 Extended
      </h1>
      <WindowButtons names={['Minimize', 'Restore', 'Close']} />
    </header>
    <nav className="flex h-5 shrink-0 items-center gap-[11px] bg-[#ededed] pl-[5px] text-[11px]">
      {menus.map((menu) => (
        <button key={menu}>{menu}</button>
      ))}
    </nav>
    <OptionsBar />
    <div className="flex min-h-0 flex-1">
      <Toolbar />
      <main className="min-w-0 flex-1 pt-[27px] pr-[125px] pl-[70px]">
        <DocumentWindow />
      </main>
      <IconDock />
      <aside className="flex w-[215px] shrink-0 flex-col border-x-2 border-[#4a4a4a] bg-[#5a5a5a] pr-0.5">
        <div className="flex h-[18px] shrink-0 items-center justify-between pr-0.5 pl-1">
          <div className="h-3 w-[5px] bg-[repeating-linear-gradient(90deg,#222_0_1px,#888_1px_2px)]" />
          <Chevrons />
        </div>
        <div className="flex flex-1 flex-col gap-0.5">
          <NavigatorPanel />
          <ColorPanel />
          <LayersPanel />
        </div>
      </aside>
    </div>
    <Callouts />
  </div>
);

export default App;
